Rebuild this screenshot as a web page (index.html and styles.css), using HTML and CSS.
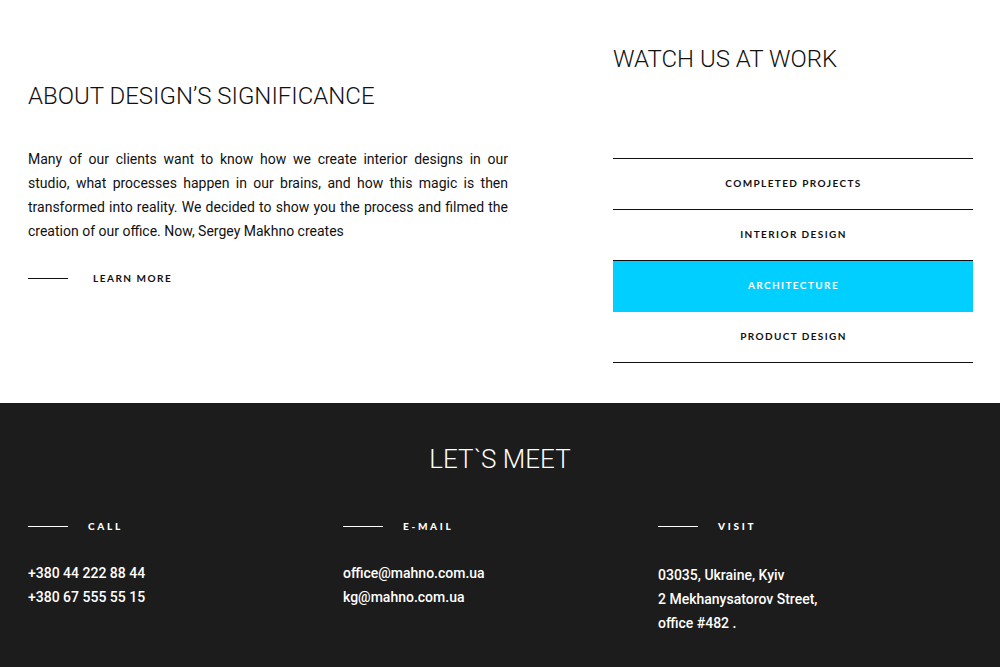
FILE: index.html
```html
<!DOCTYPE html>
<html lang="en">
<head>
<meta charset="utf-8">
<title>Mahno</title>
<link rel="stylesheet" href="styles.css">
</head>
<body>
<section class="top">
  <div class="about">
    <h2 class="heading about-heading">ABOUT DESIGN’S SIGNIFICANCE</h2>
    <p class="about-text">Many of our clients want to know how we create interior designs in our studio, what processes happen in our brains, and how this magic is then transformed into reality. We decided to show you the process and filmed the creation of our office. Now, Sergey Makhno creates</p>
    <a class="more" href="#"><span class="dash"></span><span class="more-label">LEARN MORE</span></a>
  </div>
  <div class="work">
    <h2 class="heading work-heading">WATCH US AT WORK</h2>
    <ul class="work-list">
      <li class="work-item">COMPLETED PROJECTS</li>
      <li class="work-item">INTERIOR DESIGN</li>
      <li class="work-item active">ARCHITECTURE</li>
      <li class="work-item">PRODUCT DESIGN</li>
    </ul>
  </div>
</section>
<footer class="meet">
  <h2 class="heading meet-heading">LET`S MEET</h2>
  <div class="contacts">
    <div class="contact">
      <div class="contact-title"><span class="dash light"></span><span class="contact-label">CALL</span></div>
      <div class="contact-body">+380 44 222 88 44<br>+380 67 555 55 15</div>
    </div>
    <div class="contact">
      <div class="contact-title"><span class="dash light"></span><span class="contact-label">E-MAIL</span></div>
      <div class="contact-body">office@mahno.com.ua<br>kg@mahno.com.ua</div>
    </div>
    <div class="contact">
      <div class="contact-title"><span class="dash light"></span><span class="contact-label">VISIT</span></div>
      <div class="contact-body visit">03035, Ukraine, Kyiv<br>2 Mekhanysatorov Street,<br>office #482 .</div>
    </div>
  </div>
</footer>
</body>
</html>
```
FILE: styles.css
```css
* { box-sizing: border-box; }
html, body { margin: 0; padding: 0; }
body {
  width: 1000px;
  background: #fff;
  font-family: Roboto, "Liberation Sans", sans-serif;
  color: #111;
}
.heading {
  margin: 0;
  font-family: Roboto, sans-serif;
  font-weight: 300;
  font-size: 24px;
  line-height: 30px;
  letter-spacing: 0;
}
.top {
  display: flex;
  height: 403px;
  padding: 0 27px 0 28px;
  justify-content: space-between;
}
.about {
  width: 480px;
  padding-top: 81px;
}
.about-heading { margin-bottom: 36px; color: #111; }
.about-text {
  margin: 0;
  font-size: 14px;
  line-height: 24px;
  text-align: justify;
  color: #111;
}
.more {
  display: flex;
  align-items: center;
  margin-top: 29px;
  height: 12px;
  text-decoration: none;
  color: #111;
}
.dash {
  display: block;
  width: 40px;
  height: 1px;
  background: #111;
}
.dash.light { background: #fff; }
.more-label {
  margin-left: 25px;
  font-family: Lato, sans-serif;
  font-size: 10px;
  font-weight: 700;
  letter-spacing: 1.5px;
}
.work {
  width: 360px;
  padding-top: 44px;
}
.work-heading { margin-bottom: 84px; color: #111; }
.work-list {
  list-style: none;
  margin: 0;
  padding: 0;
  border-top: 1px solid #111;
}
.work-item {
  height: 51px;
  border-bottom: 1px solid #111;
  display: flex;
  align-items: center;
  justify-content: center;
  font-family: Lato, sans-serif;
  font-size: 10px;
  font-weight: 700;
  letter-spacing: 1.4px;
  color: #111;
  padding: 0 0 2px 1px;
}
.work-item.active {
  background: #00cfff;
  border-bottom-color: #00cfff;
  color: #fff;
}
.meet {
  height: 264px;
  background: #1c1c1c;
  color: #fff;
  padding: 41px 28px 0;
}
.meet-heading {
  text-align: center;
  color: #fff;
  font-size: 26px;
}
.contacts {
  display: grid;
  grid-template-columns: 315px 315px 315px;
  margin-top: 46px;
}
.contact-title {
  display: flex;
  align-items: center;
  height: 12px;
}
.contact-label {
  margin-left: 20px;
  font-family: Lato, sans-serif;
  font-size: 10px;
  font-weight: 900;
  letter-spacing: 2.7px;
}
.contact-body {
  margin-top: 29px;
  font-size: 14px;
  line-height: 24px;
  font-weight: 500;
  color: #fff;
}
.contact-body.visit { padding-top: 2px; }
```
